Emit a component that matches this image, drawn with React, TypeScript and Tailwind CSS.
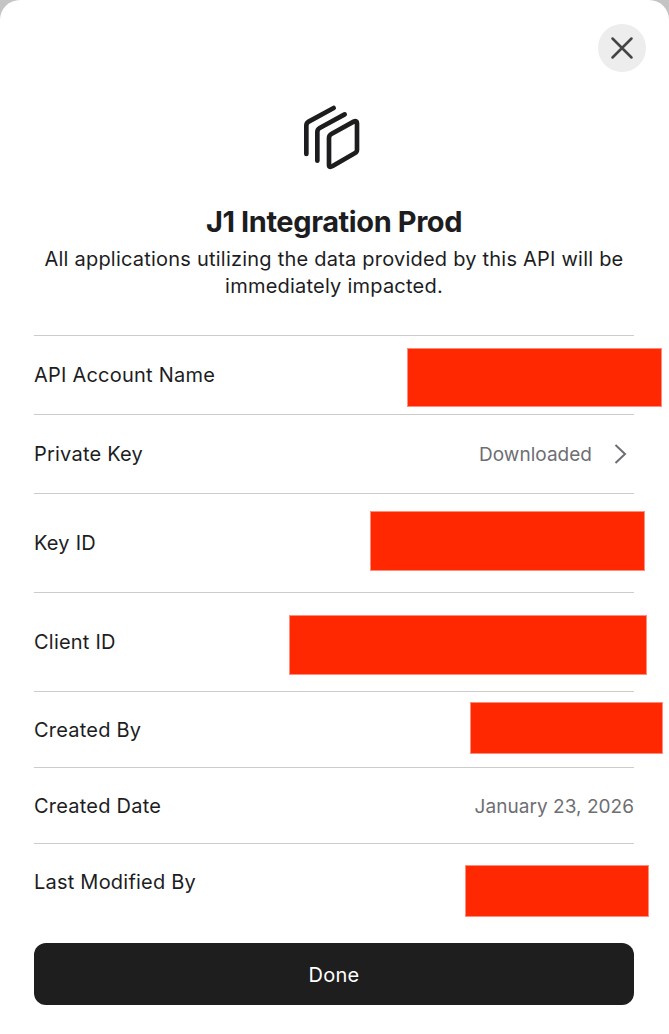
import type { ReactNode } from "react";

function Row({ label, className, children }: { label: string; className: string; children?: ReactNode }) {
  return (
    <div className={`relative flex items-center justify-between border-t border-[#cccccc] ${className}`}>
      <span className="text-[20px] leading-[26px] tracking-[0.22px]">{label}</span>
      {children}
    </div>
  );
}

function Redaction({ className }: { className: string }) {
  return <div className={`absolute border border-[#ff8d7d] bg-[#ff2800] ${className}`} />;
}

export default function App() {
  return (
    <div className="h-[1034px] w-[669px] overflow-hidden bg-[#c4c4c4] font-['Inter',sans-serif] text-[#1d1d1f]">
      <div className="flex h-full flex-col rounded-t-[20px] bg-white px-[34px]">
        <div className="-mr-[11px] flex h-[95px] justify-end pt-6">
          <button aria-label="Close" className="flex size-12 items-center justify-center rounded-full bg-[#ededed]">
            <svg width="24" height="24" viewBox="0 0 24 24" fill="none" stroke="#454545" strokeWidth="2.5" strokeLinecap="round">
              <path d="M2.5 2.5 21.5 21.5M21.5 2.5 2.5 21.5" />
            </svg>
          </button>
        </div>
        <svg className="ml-[256px] shrink-0" width="90" height="85" viewBox="0 0 270 255" fill="none" stroke="#1d1d1f" strokeWidth="14" strokeLinecap="round" strokeLinejoin="round">
          <path d="M131 39 56 80Q49 84 49 92V177" />
          <path d="M164 58 89 99Q82 103 82 111V197" />
          <path d="M117 129Q117 121 124 117L191 80Q201 75 201 85V164Q201 171 194 175L128 213Q117 219 117 210Z" />
        </svg>
        <h1 className="mt-[24px] h-[42px] w-[600px] text-center text-[29px] leading-[36px] font-bold tracking-[-0.4px]">J1 Integration Prod</h1>
        <p className="h-[89px] w-[600px] text-center text-[20px] leading-[27px] tracking-[0.22px]">
          All applications utilizing the data provided by this API will be
          <br />
          immediately impacted.
        </p>
        <div className="h-[608px] w-[600px]">
          <Row label="API Account Name" className="h-[79px]">
            <Redaction className="top-[12px] left-[373px] h-[59px] w-[255px]" />
          </Row>
          <Row label="Private Key" className="h-[79px]">
            <div className="flex items-center gap-[22px] pr-[7px] text-[#6e6e73]">
              <span className="pt-[2px] text-[19px] leading-[26px] tracking-[0.02px]">Downloaded</span>
              <svg width="13" height="20" viewBox="0 0 13 20" fill="none" stroke="#6e6e73" strokeWidth="2">
                <path d="M1.5 1 11 10 1.5 19" />
              </svg>
            </div>
          </Row>
          <Row label="Key ID" className="h-[99px]">
            <Redaction className="top-[17px] left-[336px] h-[60px] w-[275px]" />
          </Row>
          <Row label="Client ID" className="h-[99px]">
            <Redaction className="top-[22px] left-[255px] h-[60px] w-[358px]" />
          </Row>
          <Row label="Created By" className="h-[76px]">
            <Redaction className="top-[10px] left-[436px] h-[52px] w-[193px]" />
          </Row>
          <Row label="Created Date" className="h-[76px]">
            <span className="pt-[2px] text-[19px] leading-[26px] tracking-[0.04px] text-[#6e6e73]">January 23, 2026</span>
          </Row>
          <Row label="Last Modified By" className="h-[76px]">
            <Redaction className="top-[21px] left-[431px] h-[52px] w-[184px]" />
          </Row>
        </div>
        <button className="h-[62px] w-[600px] shrink-0 rounded-[12px] bg-[#1e1e1e] pt-[2px] text-[20px] tracking-[0.3px] text-white">Done</button>
      </div>
    </div>
  );
}
